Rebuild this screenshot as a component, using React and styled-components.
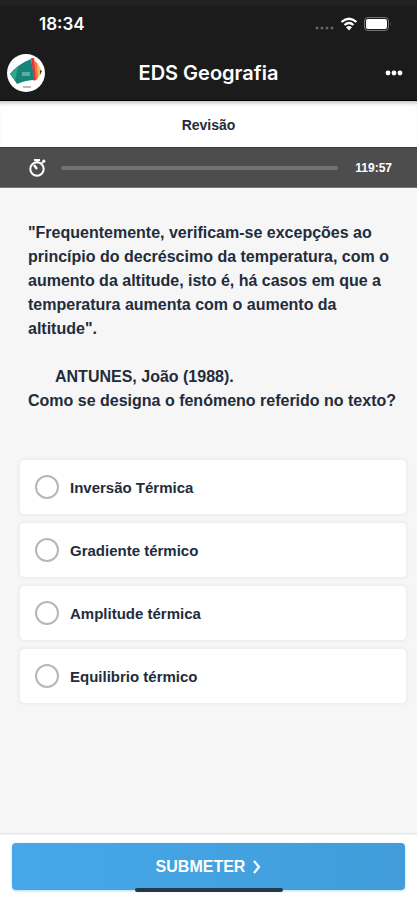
import React, { useState } from 'react';
import styled, { createGlobalStyle } from 'styled-components';

const GlobalStyle = createGlobalStyle`
* {
  box-sizing: border-box;
}

body {
  margin: 0;
  background: #f6f6f6;
  color: #232c3b;
  font-family: "Liberation Sans", Arial, sans-serif;
  font-size: 16px;
}
`

const Page = styled.div`
display: flex;
flex-direction: column;
min-height: 100vh;
`

const TopBar = styled.header`
background: #1b1b1b;
color: #fff;
border-top: 6px solid #212121;
border-bottom: 1px solid #000;
`

const StatusBar = styled.div`
display: flex;
align-items: center;
justify-content: space-between;
height: 36px;
padding: 0 26px 0 39px;
`

const Clock = styled.span`
font-family: Inter, sans-serif;
font-size: 17px;
font-weight: 600;
`

const StatusIcons = styled.div`
display: flex;
align-items: center;
gap: 6px;
`

const TitleBar = styled.div`
display: grid;
grid-template-columns: 40px 1fr 40px;
align-items: center;
height: 58px;
padding: 4px 6px 0;
`

const Title = styled.h1`
margin: 0;
font-family: Inter, sans-serif;
font-size: 20px;
font-weight: 600;
line-height: 24px;
text-align: center;
`

const MenuButton = styled.button`
display: flex;
justify-content: flex-end;
padding: 8px;
border: 0;
background: none;
`

const SectionName = styled.h2`
margin: 0;
height: 46px;
background: #fff;
box-shadow: inset 0 5px 5px -4px #aaa;
font-size: 14px;
line-height: 49px;
text-align: center;
`

const TimerBar = styled.div`
display: flex;
align-items: center;
gap: 14px;
height: 41px;
padding: 0 25px 0 28px;
border-top: 1px solid #3c3c3c;
border-bottom: 1px solid #777;
background: #4d4d4d;
color: #fff;
`

const Track = styled.div`
flex: 1;
height: 4px;
border-radius: 2px;
background: #737373;
`

const TimeLeft = styled.span`
margin-left: 3px;
font-size: 12px;
font-weight: 700;
`

const Content = styled.main`
flex: 1;
padding: 33px 10px 0 19px;
`

const Question = styled.div`
padding: 0 9px;
font-size: 16px;
font-weight: 700;
line-height: 24px;
`

const Paragraph = styled.p`
margin: 0;
`

const Citation = styled.p`
margin: 24px 0 0;
text-indent: 27px;
`

const Options = styled.fieldset`
display: flex;
flex-direction: column;
gap: 7px;
margin: 46px 0 24px;
padding: 0;
border: 0;
`

const Option = styled.label`
display: flex;
align-items: center;
gap: 11px;
height: 56px;
padding: 0 15px;
border: 1px solid #efefef;
border-radius: 5px;
background: #fff;
box-shadow: 0 0 2px 1px #efefef;
font-size: 15px;
font-weight: 700;
`

const Radio = styled.input`
appearance: none;
width: 24px;
height: 24px;
margin: 0;
border: 2px solid #b4b8ba;
border-radius: 50%;
background: #fff;

&:checked {
  border: 7px solid #45a3e3;
}
`

const Footer = styled.footer`
position: relative;
padding: 8px 12px 10px;
border-top: 1px solid #efefef;
background: #fff;
box-shadow: 0 -1px 2px #e8e8e8;
`

const SubmitButton = styled.button`
display: flex;
align-items: center;
justify-content: center;
gap: 7px;
width: 100%;
height: 47px;
border: 0;
border-radius: 4px;
background: linear-gradient(90deg, #47a7e8, #409dda);
box-shadow: 0 1px 3px #b9dcf3;
color: #fff;
font-family: inherit;
font-size: 16px;
font-weight: 700;
`

const HomeIndicator = styled.div`
position: absolute;
bottom: 8px;
left: 50%;
width: 148px;
height: 4px;
margin-left: -74px;
border-radius: 2px;
background: #26384a;
`

const answers = [
  { value: 'inversao', text: 'Inversão Térmica' },
  { value: 'gradiente', text: 'Gradiente térmico' },
  { value: 'amplitude', text: 'Amplitude térmica' },
  { value: 'equilibrio', text: 'Equilibrio térmico' }
];

const Logo = () => (
  <svg width="40" height="40" viewBox="0 0 40 40" aria-hidden="true">
    <circle cx="20" cy="20" r="19" fill="#fff" />
    <path d="M4 21Q12 11 25 6L29 27Q20 27 11 31Q8 26 4 21Z" fill="#168579" />
    <path d="M4 21Q7 17 12 13L9 28Q7 25 4 21Z" fill="#35a68e" />
    <path d="M25 5 28 5 31 26 28 28Z" fill="#dd3945" />
    <path d="M28 7 32 11 32 25 30 27Z" fill="#ef7846" />
    <path d="M31 10 35 16 34 22 32 25Z" fill="#f3c052" />
    <path d="M34 17 36 18 34 22Z" fill="#283e35" />
    <path d="M16 20H24M16 22H24" stroke="#a5d2cd" strokeWidth="1.2" />
    <path d="M17 34H25" stroke="#9ba5a4" strokeWidth="1.5" />
  </svg>
);

const CarrierDots = () => (
  <svg width="19" height="14" viewBox="0 0 19 14" fill="#656565" aria-hidden="true">
    <circle cx="2" cy="11" r="1.5" />
    <circle cx="7" cy="11" r="1.5" />
    <circle cx="12" cy="11" r="1.5" />
    <circle cx="17" cy="11" r="1.5" />
  </svg>
);

const Wifi = () => (
  <svg width="18" height="14" viewBox="0 0 18 14" aria-hidden="true">
    <g fill="none" stroke="#fff" strokeWidth="2.3">
      <path d="M1.5 5Q9-1.5 16.5 5" />
      <path d="M4.5 8Q9 4 13.5 8" />
    </g>
    <path d="M6 10.2Q9 7.8 12 10.2L9 13.5Z" fill="#fff" />
  </svg>
);

const Battery = () => (
  <svg width="27" height="14" viewBox="0 0 27 14" aria-hidden="true">
    <rect x=".5" y=".5" width="24" height="13" rx="3.5" fill="none" stroke="#777" />
    <rect x="2" y="2" width="21" height="10" rx="2" fill="#fff" />
    <path d="M26 5Q27 7 26 9Z" fill="#999" />
  </svg>
);

const Dots = () => (
  <svg width="18" height="6" viewBox="0 0 18 6" fill="#fff" aria-hidden="true">
    <circle cx="3" cy="3" r="2.4" />
    <circle cx="9" cy="3" r="2.4" />
    <circle cx="15" cy="3" r="2.4" />
  </svg>
);

const Stopwatch = () => (
  <svg width="19" height="20" viewBox="0 0 19 20" aria-hidden="true">
    <circle cx="9" cy="11" r="6.7" fill="none" stroke="#fff" strokeWidth="2" />
    <path d="M6 2H12M9 2V5M14 5 16 3M15 2 17 4" fill="none" stroke="#fff" strokeWidth="2.2" />
    <path d="M9 11 6 7" stroke="#fff" strokeWidth="2.4" />
  </svg>
);

const Chevron = () => (
  <svg width="9" height="14" viewBox="0 0 9 14" aria-hidden="true">
    <path d="M2 1 7 7 2 13" fill="none" stroke="#fff" strokeWidth="2.2" />
  </svg>
);

const App = () => {
  const [selected, setSelected] = useState('');

  return (
    <Page>
      <GlobalStyle />
      <TopBar>
        <StatusBar>
          <Clock>18:34</Clock>
          <StatusIcons>
            <CarrierDots />
            <Wifi />
            <Battery />
          </StatusIcons>
        </StatusBar>
        <TitleBar>
          <Logo />
          <Title>EDS Geografia</Title>
          <MenuButton type="button" aria-label="Menu">
            <Dots />
          </MenuButton>
        </TitleBar>
      </TopBar>
      <SectionName>Revisão</SectionName>
      <TimerBar>
        <Stopwatch />
        <Track />
        <TimeLeft>119:57</TimeLeft>
      </TimerBar>
      <Content>
        <Question id="question">
          <Paragraph>
            "Frequentemente, verificam-se excepções ao princípio do decréscimo da temperatura, com o
            aumento da altitude, isto é, há casos em que a temperatura aumenta com o aumento da altitude".
          </Paragraph>
          <Citation>ANTUNES, João (1988).</Citation>
          <Paragraph>Como se designa o fenómeno referido no texto?</Paragraph>
        </Question>
        <Options aria-labelledby="question">
          {answers.map((answer) => {
            return (
              <Option key={answer.value} htmlFor={answer.value}>
                <Radio
                  type="radio"
                  id={answer.value}
                  name="answer"
                  value={answer.value}
                  checked={selected === answer.value}
                  onChange={(e) => setSelected(e.target.value)}
                />
                {answer.text}
              </Option>
            );
          })}
        </Options>
      </Content>
      <Footer>
        <SubmitButton type="button">
          SUBMETER
          <Chevron />
        </SubmitButton>
        <HomeIndicator />
      </Footer>
    </Page>
  );
};

export default App;
